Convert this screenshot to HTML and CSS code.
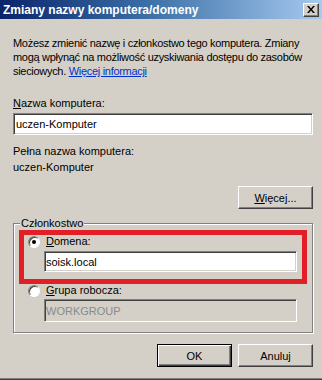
FILE: index.html
```html
<!DOCTYPE html>
<html lang="pl">
<head>
<meta charset="utf-8">
<title>Zmiany nazwy komputera/domeny</title>
<link rel="stylesheet" href="styles.css">
</head>
<body>
<div class="window">
  <div class="titlebar">
    <span class="title">Zmiany nazwy komputera/domeny</span>
    <span class="close">
      <svg width="8" height="7" viewBox="0 0 8 7"><path d="M0 0h2l2 2.4 2-2.4h2L5 3.5 8 7H6L4 4.6 2 7H0L3 3.5z" fill="#000"/></svg>
    </span>
  </div>
  <div class="content">
    <p class="intro">Możesz zmienić nazwę i członkostwo tego komputera. Zmiany<br>mogą wpłynąć na możliwość uzyskiwania dostępu do zasobów<br>sieciowych. <a class="link" href="#">Więcej informacji</a></p>
    <div class="label label-first"><u>N</u>azwa komputera:</div>
    <div class="field field-name">uczen-Komputer</div>
    <div class="label label-full">Pełna nazwa komputera:</div>
    <div class="value">uczen-Komputer</div>
    <div class="row-right row-more">
      <span class="btn"><u>W</u>ięcej...</span>
    </div>
    <fieldset class="group">
      <legend class="legend">Członkostwo</legend>
      <div class="highlight">
        <div class="radio-row">
          <span class="radio checked"></span>
          <span class="radio-label"><u>D</u>omena:</span>
        </div>
        <div class="field field-sub">soisk.local</div>
      </div>
      <div class="radio-row radio-row-outer">
        <span class="radio"></span>
        <span class="radio-label"><u>G</u>rupa robocza:</span>
      </div>
      <div class="field field-sub field-disabled">WORKGROUP</div>
    </fieldset>
    <div class="row-right row-actions">
      <span class="btn btn-default">OK</span>
      <span class="btn">Anuluj</span>
    </div>
  </div>
</div>
</body>
</html>
```
FILE: styles.css
```css
* { box-sizing: border-box; }
html, body { margin: 0; padding: 0; }
body {
  width: 322px;
  height: 380px;
  overflow: hidden;
  background: #d4d0c8;
  font-family: "Liberation Sans", Arial, sans-serif;
  font-size: 11px;
  color: #000;
}
.window {
  height: 380px;
  background: #d4d0c8;
  box-shadow: inset 0 -1px 0 #404040, inset 0 -2px 0 #808080;
}
.titlebar {
  height: 19px;
  display: flex;
  align-items: center;
  justify-content: space-between;
  padding: 0 3px 0 3px;
  background: linear-gradient(to right, #0a246a 0%, #3a6ea5 45%, #a6caf0 100%);
}
.title {
  color: #fff;
  font-weight: bold;
  font-size: 12px;
  line-height: 14px;
  white-space: nowrap;
}
.close {
  width: 16px;
  height: 14px;
  display: flex;
  align-items: center;
  justify-content: center;
  background: #d4d0c8;
  border-top: 1px solid #fff;
  border-left: 1px solid #fff;
  border-right: 1px solid #404040;
  border-bottom: 1px solid #404040;
  box-shadow: inset -1px -1px 0 #808080;
}
.content {
  padding: 17px 9px 0 13px;
}
.intro {
  margin: 0;
  line-height: 14px;
  white-space: nowrap;
  letter-spacing: -0.3px;
}
.link {
  color: #0033cc;
  text-decoration: underline;
}
.label, .value {
  line-height: 14px;
  white-space: nowrap;
}
.label-first { margin-top: 18px; }
.label-full { margin-top: 9px; }
.value { margin-top: 2px; }
.field {
  height: 22px;
  background: #fff;
  border-top: 1px solid #808080;
  border-left: 1px solid #808080;
  border-right: 1px solid #fff;
  border-bottom: 1px solid #fff;
  box-shadow: inset 1px 1px 0 #404040, inset -1px -1px 0 #d4d0c8;
  padding: 0 2px;
  display: flex;
  align-items: center;
  white-space: nowrap;
}
.field-name { margin-top: 3px; }
.field-sub {
  width: 253px;
  height: 21px;
  padding: 0 1px;
}
.field-disabled {
  background: #d4d0c8;
  color: #8a8a8a;
  height: 23px;
  margin-left: 30px;
  margin-top: 2px;
}
.row-right {
  display: flex;
  justify-content: flex-end;
  gap: 6px;
}
.row-more { margin-top: 12px; }
.row-actions { margin-top: 11px; }
.btn {
  width: 75px;
  height: 23px;
  display: flex;
  align-items: center;
  justify-content: center;
  background: #d4d0c8;
  border-top: 1px solid #fff;
  border-left: 1px solid #fff;
  border-right: 1px solid #404040;
  border-bottom: 1px solid #404040;
  box-shadow: inset -1px -1px 0 #808080, inset 1px 1px 0 #d4d0c8;
}
.btn-default {
  border: 1px solid #000;
  box-shadow: inset 1px 1px 0 #fff, inset -1px -1px 0 #404040, inset -2px -2px 0 #808080;
}
.group {
  margin: 7px 0 0 0;
  padding: 0 0 10px 0;
  min-width: 0;
  border: 1px solid #808080;
  box-shadow: 1px 1px 0 #fff, inset 1px 1px 0 #fff;
}
.legend {
  margin-left: 6px;
  padding: 0 1px;
  line-height: 14px;
  background: #d4d0c8;
}
.highlight {
  margin: 0 5px;
  border: 5px solid #e21f26;
  padding: 0 0 7px 0;
}
.radio-row {
  display: flex;
  align-items: center;
  height: 13px;
  gap: 6px;
  padding-left: 4px;
}
.radio-row-outer {
  padding-left: 14px;
}
.radio {
  width: 12px;
  height: 12px;
  border-radius: 50%;
  background: #fff;
  border: 1px solid;
  border-color: #808080 #fff #fff #808080;
  box-shadow: inset 1px 1px 0 #404040;
  display: flex;
  align-items: center;
  justify-content: center;
  flex: none;
}
.radio.checked::after {
  content: "";
  width: 4px;
  height: 4px;
  border-radius: 50%;
  background: #000;
}
.radio-label {
  line-height: 13px;
  white-space: nowrap;
}
.highlight .field-sub {
  margin-left: 20px;
  margin-top: 3px;
}
```
